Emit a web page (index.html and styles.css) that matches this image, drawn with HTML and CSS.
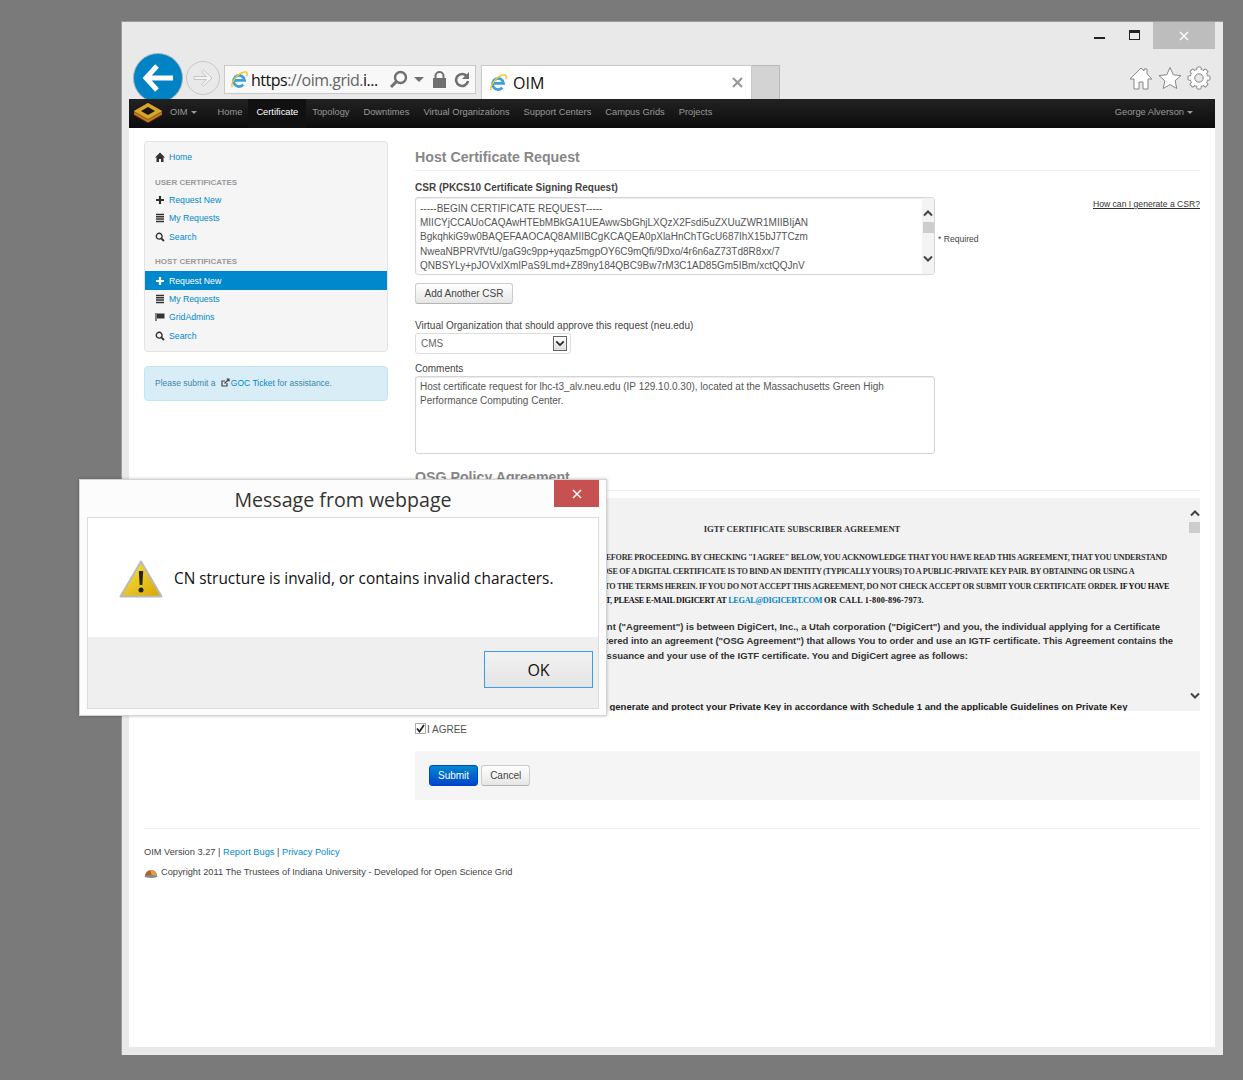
FILE: index.html
```html
<!DOCTYPE html>
<html>
  <head>
    <title>OIM</title>
    <link rel="stylesheet" href="styles.css">
  </head>
  <body>
    <svg class="defs" width="0" height="0">
      <symbol id="ie" viewBox="0 0 20 20">
        <path d="M4.500 11h11.500A6.500 6.500 0 1 0 14.500 16" fill="none" stroke="#3d9fdc" stroke-width="3.200"/>
        <path d="M1.500 19C-1 14 8 2.500 15.500 1.200c3.500-.5 4.500 1.500 3 5" fill="none" stroke="#f4c534" stroke-width="1.600"/>
      </symbol>
      <symbol id="up" viewBox="0 0 12 8">
        <path d="M2 6.500l4-4 4 4" fill="none" stroke="#444" stroke-width="2"/>
      </symbol>
      <symbol id="down" viewBox="0 0 12 8">
        <path d="M2 1.500l4 4 4-4" fill="none" stroke="#444" stroke-width="2"/>
      </symbol>
      <symbol id="plus" viewBox="0 0 10 10">
        <path d="M5 1v8M1 5h8" fill="none" stroke="currentColor" stroke-width="2.200"/>
      </symbol>
      <symbol id="list" viewBox="0 0 10 10">
        <path d="M1 1.500h8M1 3.800h8M1 6.100h8M1 8.400h8" fill="none" stroke="currentColor" stroke-width="1.500"/>
      </symbol>
      <symbol id="find" viewBox="0 0 10 10">
        <circle cx="4.200" cy="4.200" r="2.900" fill="none" stroke="currentColor" stroke-width="1.400"/>
        <path d="M6.300 6.300l2.700 2.700" stroke="currentColor" stroke-width="1.900"/>
      </symbol>
    </svg>

    <div class="window">
      <div class="titlebar">
        <span class="minimize"></span>
        <span class="restore"></span>
        <span class="close">
          <svg width="10" height="10" viewBox="0 0 10 10"><path d="M1 1l8 8M9 1l-8 8" stroke="#fff" stroke-width="1.300"/></svg>
        </span>
      </div>

      <div class="toolbar">
        <span class="back">
          <svg width="32" height="30" viewBox="0 0 32 30"><path d="M15 3L4 15l11 12M5 15h26" fill="none" stroke="#fff" stroke-width="5"/></svg>
        </span>
        <span class="forward">
          <svg width="22" height="18" viewBox="0 0 22 18"><path d="M11.500 1L20 9l-8.500 8-1.700-1.700 4.800-4.800H2v-3h12.600L9.800 2.700z" fill="#f4f4f4" stroke="#c4c4c4"/></svg>
        </span>
        <div class="address">
          <svg class="ie-icon" width="17" height="17"><use href="#ie"/></svg>
          <span class="url"><b>https</b>://oim.grid.<b>i...</b></span>
          <svg class="addr-icon" width="19" height="19" viewBox="0 0 19 19"><circle cx="11.500" cy="7.500" r="5.500" fill="none" stroke="#707070" stroke-width="2.400"/><path d="M7.500 11.500L2 17" stroke="#707070" stroke-width="3"/></svg>
          <span class="addr-caret"></span>
          <svg class="addr-icon" width="15" height="17" viewBox="0 0 15 17"><path d="M3.500 8V5a4 4 0 0 1 8 0v3" fill="none" stroke="#707070" stroke-width="2"/><rect x="1" y="7" width="13" height="10" fill="#707070"/></svg>
          <svg class="addr-icon" width="16" height="17" viewBox="0 0 16 17"><path d="M13 5.500A6 6 0 1 0 14 10" fill="none" stroke="#707070" stroke-width="2.600"/><path d="M15 1v7H8z" fill="#707070"/></svg>
        </div>
        <div class="tab">
          <svg class="ie-icon" width="17" height="17"><use href="#ie"/></svg>
          <span class="tab-title">OIM</span>
          <svg class="tab-close" width="11" height="11" viewBox="0 0 11 11"><path d="M1 1l9 9M10 1l-9 9" stroke="#999" stroke-width="2.200"/></svg>
        </div>
        <span class="new-tab"></span>
        <div class="tools">
          <svg width="24" height="24" viewBox="0 0 24 24"><path d="M12 2L1 13h4v10h5v-7h4v7h5V13h4l-5-5V3h-3v2z" fill="#fff" stroke="#888"/></svg>
          <svg width="24" height="24" viewBox="0 0 24 24"><path d="M12 1.500l3.200 7.300 7.800.8-5.900 5.200 1.700 7.700-6.800-4-6.800 4 1.700-7.700L1 9.600l7.800-.8z" fill="#fff" stroke="#888"/></svg>
          <svg width="24" height="24" viewBox="0 0 24 24">
            <circle cx="12" cy="12" r="8.800" fill="#fff" stroke="#888"/>
            <g fill="#fff" stroke="#888">
              <rect x="9.800" y="1" width="4.400" height="22" rx="1"/>
              <rect x="9.800" y="1" width="4.400" height="22" rx="1" transform="rotate(45 12 12)"/>
              <rect x="9.800" y="1" width="4.400" height="22" rx="1" transform="rotate(90 12 12)"/>
              <rect x="9.800" y="1" width="4.400" height="22" rx="1" transform="rotate(135 12 12)"/>
            </g>
            <circle cx="12" cy="12" r="8.300" fill="#fff"/>
            <circle cx="12" cy="12" r="4.200" fill="#e9e9e9" stroke="#888"/>
          </svg>
        </div>
      </div>

      <div class="page">
        <div class="navbar">
          <svg class="brand" width="30" height="20" viewBox="0 0 30 20">
            <path d="M15 3L29 11v1L15 20 1 12v-1z" fill="#a8441c"/>
            <path d="M15 2L29 10v1L15 19 1 11v-1z" fill="#c9821f"/>
            <path d="M15 0l14 8v1.500L15 17.500 1 9.500V8z" fill="#8a6a1c"/>
            <path d="M15 0l14 8-14 8L1 8z" fill="#d9a52c"/>
            <path d="M15 4l7 4-7 4-7-4z" fill="#161616"/>
          </svg>
          <span class="nav-link nav-oim">OIM <i class="caret"></i></span>
          <a class="nav-link">Home</a>
          <a class="nav-link active">Certificate</a>
          <a class="nav-link">Topology</a>
          <a class="nav-link">Downtimes</a>
          <a class="nav-link">Virtual Organizations</a>
          <a class="nav-link">Support Centers</a>
          <a class="nav-link">Campus Grids</a>
          <a class="nav-link">Projects</a>
          <span class="nav-link nav-user">George Alverson <i class="caret"></i></span>
        </div>

        <div class="content">
          <div class="columns">
            <div class="sidebar">
              <div class="side-menu">
                <a class="side-item">
                  <svg width="10" height="10" viewBox="0 0 10 10"><path d="M5 .5L0 5.500h1.500V10h2.500V7h2v3h2.500V5.500H10z" fill="#333"/></svg>
                  Home
                </a>
                <div class="side-head">USER CERTIFICATES</div>
                <a class="side-item"><svg width="10" height="10"><use href="#plus"/></svg> Request New</a>
                <a class="side-item"><svg width="10" height="10"><use href="#list"/></svg> My Requests</a>
                <a class="side-item"><svg width="10" height="10"><use href="#find"/></svg> Search</a>
                <div class="side-head">HOST CERTIFICATES</div>
                <a class="side-item current"><svg width="10" height="10"><use href="#plus"/></svg> Request New</a>
                <a class="side-item"><svg width="10" height="10"><use href="#list"/></svg> My Requests</a>
                <a class="side-item">
                  <svg width="10" height="10" viewBox="0 0 10 10"><path d="M1 1v8" stroke="#333" stroke-width="1.200"/><path d="M2 1.500h7.500v5H2z" fill="#333"/></svg>
                  GridAdmins
                </a>
                <a class="side-item"><svg width="10" height="10"><use href="#find"/></svg> Search</a>
              </div>
              <div class="side-alert">
                Please submit a
                <svg width="9" height="9" viewBox="0 0 9 9"><path d="M6 5v3H1V3h3" fill="none" stroke="#444" stroke-width="1.200"/><path d="M3.500 5.500L8 1M5.500 1H8v2.500" fill="none" stroke="#444" stroke-width="1.200"/></svg><a class="alert-link">GOC Ticket</a> for assistance.
              </div>
            </div>

            <div class="main">
              <h2 class="heading">Host Certificate Request</h2>
              <div class="label strong">CSR (PKCS10 Certificate Signing Request)</div>
              <div class="csr-row">
                <div class="textbox csr-box">
                  <div class="box-text">-----BEGIN CERTIFICATE REQUEST-----<br>MIICYjCCAUoCAQAwHTEbMBkGA1UEAwwSbGhjLXQzX2Fsdi5uZXUuZWR1MIIBIjAN<br>BgkqhkiG9w0BAQEFAAOCAQ8AMIIBCgKCAQEA0pXlaHnChTGcU687IhX15bJ7TCzm<br>NweaNBPRVfVtU/gaG9c9pp+yqaz5mgpOY6C9mQfi/9Dxo/4r6n6aZ73Td8R8xx/7<br>QNBSYLy+pJOVxlXmIPaS9Lmd+Z89ny184QBC9Bw7rM3C1AD85Gm5IBm/xctQQJnV</div>
                  <div class="scroll">
                    <svg class="chev" width="12" height="8"><use href="#up"/></svg>
                    <span class="thumb"></span>
                    <svg class="chev chev-end" width="12" height="8"><use href="#down"/></svg>
                  </div>
                </div>
                <div class="csr-side">
                  <a class="help-link">How can I generate a CSR?</a>
                  <span class="required">* Required</span>
                </div>
              </div>
              <button class="btn add-btn">Add Another CSR</button>
              <div class="label vo-label">Virtual Organization that should approve this request (neu.edu)</div>
              <div class="select">
                <span>CMS</span>
                <span class="select-arrow"><svg width="10" height="7" viewBox="0 0 12 8"><path d="M1.500 1.500l4.500 4.500 4.500-4.500" fill="none" stroke="#222" stroke-width="2"/></svg></span>
              </div>
              <div class="label comments-label">Comments</div>
              <div class="textbox comments-box">
                <div class="box-text">Host certificate request for lhc-t3_alv.neu.edu (IP 129.10.0.30), located at the Massachusetts Green High Performance Computing Center.</div>
              </div>
              <h2 class="heading policy-heading">OSG Policy Agreement</h2>
              <div class="agreement">
                <div class="agreement-text">
                  <p class="agree-title">IGTF CERTIFICATE SUBSCRIBER AGREEMENT</p>
                  <p class="agree-legal">PLEASE READ THESE TERMS CAREFULLY BEFORE PROCEEDING. BY CHECKING "I AGREE" BELOW, YOU ACKNOWLEDGE THAT YOU HAVE READ THIS AGREEMENT, THAT YOU UNDERSTAND<br>AND YOU AGREE TO ITS TERMS. THE PURPOSE OF A DIGITAL CERTIFICATE IS TO BIND AN IDENTITY (TYPICALLY YOURS) TO A PUBLIC-PRIVATE KEY PAIR. BY OBTAINING OR USING A<br>DIGITAL CERTIFICATE, YOU FULLY AGREE TO THE TERMS HEREIN. IF YOU DO NOT ACCEPT THIS AGREEMENT, DO NOT CHECK ACCEPT OR SUBMIT YOUR CERTIFICATE ORDER. <b>IF YOU HAVE</b><br><b class="legal-last">ANY QUESTIONS ABOUT THIS AGREEMENT, PLEASE E-MAIL DIGICERT AT <a class="legal-link">LEGAL@DIGICERT.COM</a> <span class="legal-tail">OR CALL 1-800-896-7973.</span></b></p>
                  <p class="agree-body">This Certificate Subscriber Agreement ("Agreement") is between DigiCert, Inc., a Utah corporation ("DigiCert") and you, the individual applying for a Certificate<br>Open Science Grids ("OSG") has entered into an agreement ("OSG Agreement") that allows You to order and use an IGTF certificate. This Agreement contains the<br>the terms and conditions about the issuance and your use of the IGTF certificate. You and DigiCert agree as follows:</p>
                  <p class="agree-body agree-last">1. Private Key Use. You will securely generate and protect your Private Key in accordance with Schedule 1 and the applicable Guidelines on Private Key</p>
                </div>
                <div class="scroll agree-scroll">
                  <svg class="chev" width="12" height="8"><use href="#up"/></svg>
                  <span class="thumb"></span>
                  <svg class="chev chev-end" width="12" height="8"><use href="#down"/></svg>
                </div>
              </div>
              <div class="label agree-check">
                <span class="checkbox"><svg width="9" height="9" viewBox="0 0 9 9"><path d="M1 4.500l2.500 3L8 1" fill="none" stroke="#222" stroke-width="1.800"/></svg></span>I AGREE
              </div>
              <div class="actions">
                <button class="btn submit">Submit</button>
                <button class="btn">Cancel</button>
              </div>
            </div>
          </div>

          <div class="footer">
            <p>OIM Version 3.27 | <a>Report Bugs</a> | <a>Privacy Policy</a></p>
            <p class="copyright">
              <svg width="14" height="11" viewBox="0 0 14 11"><path d="M1 9a6 6 0 0 1 12 0z" fill="#b5611c"/><path d="M6 3a6 6 0 0 1 7 6H8z" fill="#d9a048"/><ellipse cx="7" cy="9.500" rx="6.500" ry="1.500" fill="#888"/></svg>
              Copyright 2011 The Trustees of Indiana University - Developed for Open Science Grid
            </p>
          </div>
        </div>
      </div>
    </div>

    <div class="dialog">
      <div class="dialog-title">Message from webpage</div>
      <span class="dialog-close">
        <svg width="10" height="10" viewBox="0 0 10 10"><path d="M1 1l8 8M9 1l-8 8" stroke="#fff" stroke-width="1.500"/></svg>
      </span>
      <div class="dialog-panel">
        <div class="dialog-body">
          <svg width="44" height="38" viewBox="0 0 44 38">
            <defs>
              <linearGradient id="warn" x1="0" y1="0" x2="1" y2="1">
                <stop offset="0" stop-color="#f7e94a"/>
                <stop offset="1" stop-color="#d9a400"/>
              </linearGradient>
            </defs>
            <path d="M22 1.500L42.500 36.500H1.500z" fill="url(#warn)" stroke="#b9b9b9" stroke-width="2" stroke-linejoin="round"/>
            <path d="M19.800 11h4.400l-.9 14h-2.600z" fill="#222"/>
            <circle cx="22" cy="30" r="2.500" fill="#222"/>
          </svg>
          <span class="dialog-msg">CN structure is invalid, or contains invalid characters.</span>
        </div>
        <div class="dialog-foot">
          <button class="ok">OK</button>
        </div>
      </div>
    </div>
  </body>
</html>
```

FILE: styles.css
```css
html,
body {
  margin: 0;
  height: 1080px;
  overflow: hidden;
}

body {
  background-color: #7a7a7a;
  padding: 21px 20px 0 121px;
  box-sizing: border-box;
  font-family: "Liberation Sans", Arial, sans-serif;
}

.defs {
  position: absolute;
}

a {
  color: #0088cc;
}

.window {
  height: 1034px;
  box-sizing: border-box;
  background-color: #e9e9e9;
  border: 1px solid #9a9a9a;
  border-bottom: 0;
  border-right-width: 0;
  padding: 0 8px 8px 7px;
  display: flex;
  flex-direction: column;
}

.titlebar {
  height: 27px;
  flex-shrink: 0;
  display: flex;
  justify-content: flex-end;
  align-items: flex-start;
}

.minimize {
  width: 11px;
  height: 2px;
  margin-top: 15px;
  margin-right: 24px;
  background-color: #222;
}

.restore {
  width: 9px;
  height: 6px;
  margin-top: 8px;
  margin-right: 13px;
  border: 1px solid #222;
  border-top-width: 3px;
}

.close {
  width: 62px;
  height: 27px;
  background-color: #bdbdbd;
  display: flex;
  align-items: center;
  justify-content: center;
}

.toolbar {
  height: 50px;
  flex-shrink: 0;
  display: flex;
  align-items: flex-start;
  padding-left: 4px;
}

.back {
  width: 50px;
  height: 50px;
  margin-top: 4px;
  box-sizing: border-box;
  border: 1px solid #9fb3bf;
  border-radius: 50%;
  background-color: #0083c5;
  display: flex;
  align-items: center;
  justify-content: center;
  flex-shrink: 0;
}

.forward {
  width: 34px;
  height: 34px;
  margin: 12px 4px 0 3px;
  box-sizing: border-box;
  border: 1px solid #c8c8c8;
  border-radius: 50%;
  display: flex;
  align-items: center;
  justify-content: center;
  flex-shrink: 0;
}

.address {
  width: 252px;
  height: 29px;
  margin-top: 16px;
  box-sizing: border-box;
  background-color: #f8f8f8;
  border: 1px solid #c9c9c9;
  display: flex;
  align-items: center;
  padding-left: 6px;
  flex-shrink: 0;
}

.ie-icon {
  flex-shrink: 0;
}

.url {
  font-family: "Open Sans", sans-serif;
  font-size: 16px;
  letter-spacing: -0.5px;
  color: #666;
  margin-left: 3px;
  width: 131px;
  white-space: nowrap;
}

.url b {
  font-weight: 400;
  color: #111;
}

.addr-icon {
  flex-shrink: 0;
  margin-left: 7px;
}

.addr-caret {
  width: 0;
  height: 0;
  margin-left: 6px;
  margin-right: 1px;
  border-left: 5px solid transparent;
  border-right: 5px solid transparent;
  border-top: 5px solid #707070;
}

.tab {
  width: 271px;
  height: 34px;
  margin-top: 16px;
  margin-left: 5px;
  box-sizing: border-box;
  background-color: #fff;
  border: 1px solid #c9c9c9;
  border-bottom: 0;
  display: flex;
  align-items: center;
  padding: 0 8px;
  flex-shrink: 0;
}

.tab-title {
  font-family: "Open Sans", sans-serif;
  font-size: 16px;
  color: #111;
  margin-left: 6px;
  flex: 1;
}

.new-tab {
  width: 28px;
  height: 34px;
  margin-top: 16px;
  box-sizing: border-box;
  background-color: #d3d3d3;
  border: 1px solid #b9b9b9;
  border-left: 0;
  border-bottom: 0;
  flex-shrink: 0;
}

.tools {
  margin-left: auto;
  margin-top: 17px;
  margin-right: 4px;
  display: flex;
  gap: 5px;
}

.page {
  flex: 1;
  background-color: #fff;
  position: relative;
  display: flex;
  flex-direction: column;
}

.navbar {
  height: 29px;
  flex-shrink: 0;
  background: linear-gradient(#222, #0c0c0c);
  display: flex;
  align-items: stretch;
  font-size: 9.300px;
  color: #999;
}

.brand {
  margin: 4px 0 0 4px;
}

.nav-link {
  padding: 0 7px 3px;
  display: flex;
  align-items: center;
  color: #999;
  white-space: nowrap;
}

.nav-oim {
  margin-right: 7px;
  gap: 3px;
}

.nav-link.active {
  color: #fff;
  background-color: #111;
  padding: 0 8px 3px;
  margin: 0 -1px;
}

.nav-user {
  margin-left: auto;
  margin-right: 15px;
  gap: 3px;
}

.caret {
  width: 0;
  height: 0;
  border-left: 3px solid transparent;
  border-right: 3px solid transparent;
  border-top: 3px solid #999;
}

.content {
  padding: 13px 15px 0;
}

.columns {
  display: flex;
  gap: 27px;
}

.sidebar {
  width: 244px;
  flex-shrink: 0;
}

.side-menu {
  height: 211px;
  box-sizing: border-box;
  background-color: #f5f5f5;
  border: 1px solid #e3e3e3;
  border-radius: 4px;
  padding-top: 6px;
  font-size: 8.700px;
}

.side-item {
  display: flex;
  align-items: center;
  gap: 4px;
  height: 18.500px;
  padding-left: 10px;
  color: #0088cc;
}

.side-item svg {
  color: #333;
  flex-shrink: 0;
}

.side-item.current {
  background-color: #0088cc;
  color: #fff;
  height: 19px;
  margin-top: 1px;
  margin-bottom: -.500px;
}

.side-item.current svg {
  color: #fff;
}

.side-head {
  font-size: 8px;
  font-weight: bold;
  color: #999;
  padding-left: 10px;
  height: 16px;
  line-height: 15px;
  margin-top: 8px;
}

.side-alert {
  margin-top: 14px;
  height: 35px;
  box-sizing: border-box;
  background-color: #d9edf7;
  border: 1px solid #bce8f1;
  border-radius: 4px;
  padding-left: 10px;
  font-size: 8.500px;
  line-height: 33px;
  color: #3a87ad;
  white-space: nowrap;
}

.side-alert svg {
  margin-left: 3px;
  vertical-align: -1px;
}

.alert-link {
  margin-left: 1px;
}

.main {
  width: 785px;
  font-size: 10px;
  color: #444;
}

.heading {
  margin: 7px 0 0;
  font-size: 14.200px;
  line-height: 18px;
  font-weight: bold;
  color: #888;
  padding-bottom: 4px;
  border-bottom: 1px solid #eee;
}

.label {
  line-height: 14px;
  white-space: nowrap;
}

.strong {
  font-weight: bold;
  margin-top: 10px;
}

.csr-row {
  display: flex;
  margin-top: 2px;
}

.textbox {
  width: 520px;
  box-sizing: border-box;
  border: 1px solid #d5d5d5;
  border-radius: 3px;
  box-shadow: inset 0 1px 1px rgba(0, 0, 0, 0.08);
  display: flex;
  background-color: #fff;
}

.csr-box {
  height: 78px;
  flex-shrink: 0;
}

.comments-box {
  height: 78px;
}

.box-text {
  flex: 1;
  padding: 3px 4px;
  line-height: 14.200px;
  overflow: hidden;
  color: #555;
}

.csr-box .box-text {
  padding-top: 4px;
  white-space: nowrap;
}

.scroll {
  width: 12px;
  flex-shrink: 0;
  background-color: #f3f3f3;
  display: flex;
  flex-direction: column;
  align-items: center;
}

.chev {
  margin-top: 11px;
  flex-shrink: 0;
}

.chev-end {
  margin-top: auto;
  margin-bottom: 11px;
}

.thumb {
  width: 11px;
  height: 11px;
  margin-top: 5px;
  background-color: #cdcdcd;
}

.csr-side {
  flex: 1;
  display: flex;
  flex-direction: column;
  font-size: 8.600px;
  padding-left: 3px;
}

.help-link {
  color: #333;
  text-decoration: underline;
  text-align: right;
  margin-top: 2px;
}

.required {
  margin-top: 25px;
}

.btn {
  height: 21px;
  box-sizing: border-box;
  padding: 0 8px;
  font-family: "Liberation Sans", Arial, sans-serif;
  font-size: 10px;
  color: #444;
  background: linear-gradient(#fff, #e6e6e6);
  border: 1px solid #ccc;
  border-bottom-color: #b3b3b3;
  border-radius: 3px;
}

.add-btn {
  display: block;
  margin-top: 8px;
  padding: 0 8.500px;
}

.vo-label {
  margin-top: 15px;
}

.select {
  width: 156px;
  height: 21px;
  box-sizing: border-box;
  border: 1px solid #ddd;
  border-radius: 3px;
  display: flex;
  align-items: center;
  justify-content: space-between;
  padding: 0 3px 0 5px;
  color: #666;
}

.select-arrow {
  width: 14px;
  height: 15px;
  box-sizing: border-box;
  border: 1px solid #666;
  background: linear-gradient(#fff, #ddd);
  display: flex;
  align-items: center;
  justify-content: center;
}

.comments-label {
  margin-top: 8px;
}

.policy-heading {
  margin-top: 14px;
}

.agreement {
  height: 213px;
  margin-top: 7px;
  background-color: #f2f2f2;
  display: flex;
  overflow: hidden;
}

.agreement-text {
  flex: 1;
  padding-left: 23px;
  overflow: hidden;
  white-space: nowrap;
}

.agreement-text .agree-title {
  font-family: "Liberation Serif", serif;
  font-weight: bold;
  font-size: 8.600px;
  color: #333;
  text-align: center;
  padding-top: 24px;
  margin-left: -23px;
}

.agreement-text p {
  margin: 0;
  line-height: 14.500px;
}

.agree-legal {
  font-family: "Liberation Serif", serif;
  font-weight: bold;
  font-size: 8.200px;
  letter-spacing: -0.26px;
  color: #333;
  padding-top: 14px;
}

.agree-legal b {
  color: #111;
}

.legal-last {
  padding-left: 7px;
}

.legal-link {
  color: #0088cc;
}

.legal-tail {
  letter-spacing: 0.25px;
}

.agree-body {
  font-weight: bold;
  font-size: 9.500px;
  color: #333;
  padding-top: 11px;
  padding-left: 5px;
}

.agreement-text .agree-last {
  padding-top: 37px;
  color: #222;
}

.agree-scroll {
  width: 11px;
  background-color: #f2f2f2;
}

.agree-check {
  margin-top: 12px;
  display: flex;
  align-items: center;
  color: #555;
}

.checkbox {
  width: 9px;
  height: 9px;
  margin-top: -3px;
  margin-right: 1px;
  border: 1px solid #aaa;
  display: flex;
}

.actions {
  height: 49px;
  margin-top: 14px;
  box-sizing: border-box;
  background-color: #f5f5f5;
  padding: 14px;
  display: flex;
  gap: 3px;
}

.submit {
  color: #fff;
  background: linear-gradient(#0088cc, #0044cc);
  border-color: #0044cc;
}

.footer {
  margin-top: 28px;
  border-top: 1px solid #eee;
  padding-top: 16px;
  font-size: 9.250px;
  color: #444;
}

.footer p {
  margin: 0;
  line-height: 14px;
}

.footer .copyright {
  margin-top: 6px;
  display: flex;
  align-items: center;
  gap: 3px;
}

.dialog {
  position: absolute;
  left: 79px;
  top: 479px;
  width: 528px;
  height: 237px;
  box-sizing: border-box;
  background-color: #fcfcfc;
  border: 1px solid #d4d4d4;
  box-shadow: 0 0 3px rgba(0, 0, 0, 0.25);
  padding: 37px 7px 6px;
  display: flex;
}

.dialog-title {
  position: absolute;
  left: 0;
  right: 0;
  top: 6px;
  text-align: center;
  font-family: "Open Sans", sans-serif;
  font-size: 19.600px;
  line-height: 28px;
  color: #333;
}

.dialog-close {
  position: absolute;
  right: 7px;
  top: 0;
  width: 45px;
  height: 27px;
  background-color: #c75050;
  display: flex;
  align-items: center;
  justify-content: center;
}

.dialog-panel {
  flex: 1;
  border: 1px solid #dcdcdc;
  display: flex;
  flex-direction: column;
  background-color: #fff;
}

.dialog-body {
  height: 119px;
  box-sizing: border-box;
  padding: 2px 0 0 31px;
  flex-shrink: 0;
  display: flex;
  align-items: center;
  gap: 11px;
}

.dialog-msg {
  font-family: "Open Sans", sans-serif;
  font-size: 15.400px;
  color: #111;
  white-space: nowrap;
}

.dialog-foot {
  flex: 1;
  background-color: #efefef;
  display: flex;
  justify-content: flex-end;
  align-items: flex-start;
  padding: 14px 5px 0 0;
}

.ok {
  width: 109px;
  height: 37px;
  box-sizing: border-box;
  border: 1px solid #3d9be9;
  background: linear-gradient(#f2f2f2, #e4e4e4);
  font-family: "Open Sans", sans-serif;
  font-size: 16px;
  color: #111;
}
```
